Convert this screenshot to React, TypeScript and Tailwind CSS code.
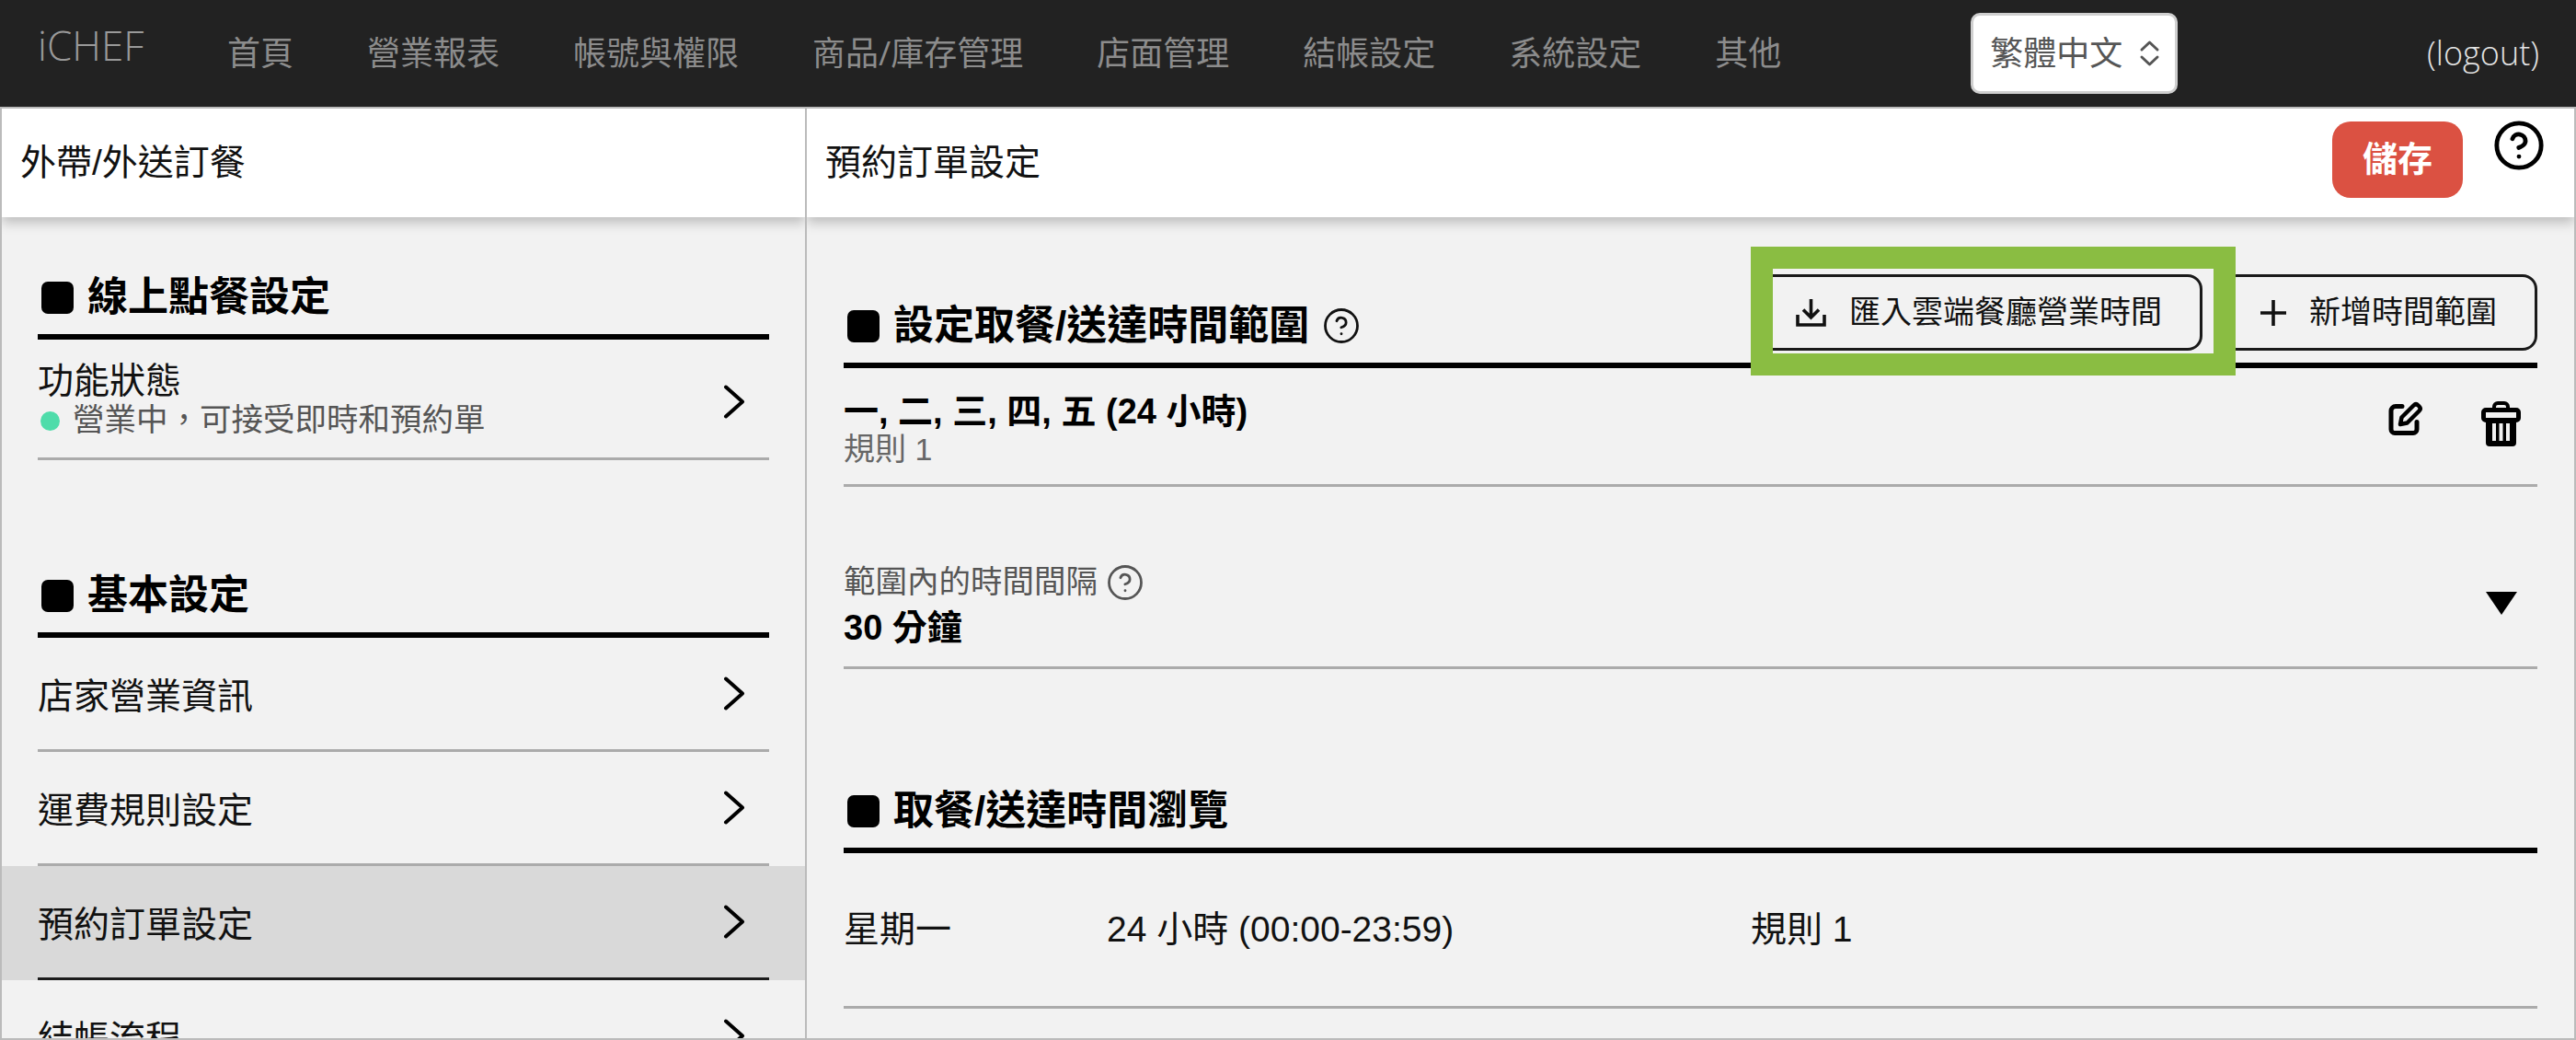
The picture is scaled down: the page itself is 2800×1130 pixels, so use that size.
import React from "react";
import { CircleHelp } from "lucide-react";

const sans = "font-['Liberation_Sans','Noto_Sans_CJK_TC',sans-serif]";

function Chevron() {
  return (
    <svg width="24" height="37" viewBox="0 0 24 37" fill="none" className="shrink-0">
      <path d="M3 2.5 L21 18.5 L3 34.5" stroke="#000" strokeWidth="4" strokeLinecap="round" strokeLinejoin="round" />
    </svg>
  );
}

function SectionHeading({ text, help }: { text: string; help?: boolean }) {
  return (
    <div className="h-[54px] flex items-center">
      <span className="w-[35px] h-[35px] rounded-[7px] bg-black ml-[4px] shrink-0" />
      <span className="ml-[15px] text-[44px] leading-[54px] font-bold text-black whitespace-nowrap">{text}</span>
      {help && <CircleHelp size={42} strokeWidth={1.6} color="#111" className="ml-[14px] shrink-0" />}
    </div>
  );
}

function MenuRow({ label, selected, last }: { label: string; selected?: boolean; last?: boolean }) {
  return (
    <div className={selected ? "bg-[#d9d9d9] px-[39px]" : "px-[39px]"}>
      <div
        className={
          "h-[124px] flex items-center justify-between pr-[26px] border-b-[3px] " +
          (selected ? "border-[#1c1c1c]" : last ? "border-transparent" : "border-[#ababab]")
        }
      >
        <span className="text-[39px] leading-[46px] text-[#111] pt-[6px] whitespace-nowrap">{label}</span>
        <Chevron />
      </div>
    </div>
  );
}

function EditIcon() {
  return (
    <svg width="38" height="37" viewBox="0 0 38 37" fill="none">
      <path d="M15 5.5H8a5 5 0 0 0-5 5v20a4 4 0 0 0 4 4h20a4 4 0 0 0 4-4v-8" stroke="#000" strokeWidth="5" strokeLinecap="round" />
      <path d="M13 25l1.5-7.5L27.5 4.5c1.6-1.6 3.4-1.6 5 0l1 1c1.6 1.6 1.6 3.4 0 5L20.5 23.5z" stroke="#000" strokeWidth="4.5" strokeLinejoin="round" />
    </svg>
  );
}

function TrashIcon() {
  return (
    <svg width="43" height="49" viewBox="0 0 43 49" fill="none">
      <path d="M14 10V6a4 4 0 0 1 4-4h7a4 4 0 0 1 4 4v4" stroke="#000" strokeWidth="4" />
      <rect x="2.5" y="9.5" width="38" height="11" rx="2.5" stroke="#000" strokeWidth="5" />
      <path d="M5 20h33v25a4 4 0 0 1-4 4H9a4 4 0 0 1-4-4z" fill="#000" />
      <rect x="12" y="24" width="4" height="19" fill="#f2f2f2" />
      <rect x="19.5" y="24" width="4" height="19" fill="#f2f2f2" />
      <rect x="27" y="24" width="4" height="19" fill="#f2f2f2" />
    </svg>
  );
}

export default function App() {
  return (
    <div className={"w-[2800px] h-[1130px] overflow-hidden flex flex-col bg-[#f2f2f2] " + sans}>
      <nav className="h-[116px] shrink-0 bg-[#222222] flex items-center pl-[41px] pr-[40px] font-['Open_Sans','Noto_Sans_CJK_TC',sans-serif]">
        <span className="text-[44px] leading-none font-light text-[#9a9a9a] -mt-[18px] w-[206px] shrink-0">iCHEF</span>
        <div className="flex gap-[80px] text-[36px] leading-[48px] text-[#8c8c8c] whitespace-nowrap">
          <span>首頁</span>
          <span>營業報表</span>
          <span>帳號與權限</span>
          <span>商品/庫存管理</span>
          <span>店面管理</span>
          <span>結帳設定</span>
          <span>系統設定</span>
          <span>其他</span>
        </div>
        <div className="ml-[206px] w-[225px] h-[88px] shrink-0 bg-white border-[3px] border-[#cfcfcf] rounded-[10px] flex items-center pl-[18px] gap-[18px] text-[36px] text-[#555]">
          <span className="whitespace-nowrap">繁體中文</span>
          <svg width="23" height="30" viewBox="0 0 23 30" fill="none" className="shrink-0">
            <path d="M3 11L11.5 3L20 11M3 19L11.5 27L20 19" stroke="#555" strokeWidth="3" strokeLinecap="round" strokeLinejoin="round" />
          </svg>
        </div>
        <span className="ml-auto text-[36px] font-light text-[#e4e4e4] whitespace-nowrap">(logout)</span>
      </nav>

      <div className="flex-1 min-h-0 flex border-t-2 border-b-2 border-l-2 border-r-2 border-[#bbbbbb]">
        <aside className="w-[875px] shrink-0 border-r-2 border-[#bbbbbb] flex flex-col min-h-0 overflow-hidden">
          <header className="relative z-10 h-[118px] shrink-0 bg-white shadow-[0_6px_12px_rgba(0,0,0,0.22)] flex items-center pl-[20px] text-[39px] text-[#111]">
            外帶/外送訂餐
          </header>
          <div className="flex-1 min-h-0 overflow-hidden pt-[60px]">
            <div className="px-[39px]">
              <div className="pb-[13px] border-b-[6px] border-black">
                <SectionHeading text="線上點餐設定" />
              </div>
              <div className="flex items-center justify-between pr-[26px] pt-[24px] pb-[18px] border-b-[3px] border-[#ababab]">
                <div>
                  <div className="text-[39px] leading-[42px] text-[#111]">功能狀態</div>
                  <div className="flex items-center h-[44px] text-[34.5px] text-[#555]">
                    <span className="w-[21px] h-[21px] rounded-full bg-[#4fdcaa] ml-[3px] mr-[14px]" />
                    營業中，可接受即時和預約單
                  </div>
                </div>
                <Chevron />
              </div>
              <div className="mt-[120px] pb-[13px] border-b-[6px] border-black">
                <SectionHeading text="基本設定" />
              </div>
            </div>
            <MenuRow label="店家營業資訊" />
            <MenuRow label="運費規則設定" />
            <MenuRow label="預約訂單設定" selected />
            <MenuRow label="結帳流程" last />
          </div>
        </aside>

        <main className="flex-1 min-w-0 flex flex-col min-h-0 overflow-hidden">
          <header className="relative z-10 h-[118px] shrink-0 bg-white shadow-[0_6px_12px_rgba(0,0,0,0.22)] flex items-start justify-between pl-[20px] pr-[36px]">
            <span className="text-[39px] leading-[118px] text-[#111] whitespace-nowrap">預約訂單設定</span>
            <div className="flex items-start gap-[37px] pt-[14px]">
              <button className="w-[142px] h-[83px] rounded-[20px] bg-[#db5142] text-white text-[38px] font-bold flex items-center justify-center">
                儲存
              </button>
              <CircleHelp size={58} strokeWidth={2} color="#000" className="-mx-[5px] -mt-[3px]" />
            </div>
          </header>
          <div className="flex-1 min-h-0 overflow-hidden px-[40px] pt-[62px]">
            <div className="flex justify-between pb-[13px] border-b-[6px] border-black">
              <div className="self-end">
                <SectionHeading text="設定取餐/送達時間範圍" help />
              </div>
              <div className="flex gap-[21px]">
                <div className="relative">
                  <button className="h-[83px] border-[3px] border-[#1a1a1a] rounded-[16px] pl-[39px] pr-[41px] flex items-center gap-[25px] text-[34px] text-[#111] whitespace-nowrap">
                    <svg width="33" height="31" viewBox="0 0 33 31" fill="none">
                      <path d="M16.5 1V20M8 12.5L16.5 21L25 12.5" stroke="#111" strokeWidth="3.6" />
                      <path d="M2 18V29H31V18" stroke="#111" strokeWidth="3.6" />
                    </svg>
                    匯入雲端餐廳營業時間
                  </button>
                  <div className="absolute -left-[7px] -top-[30px] -right-[36px] -bottom-[27px] border-[24px] border-[#8abd42] pointer-events-none" />
                </div>
                <button className="h-[83px] border-[3px] border-[#1a1a1a] rounded-[16px] pl-[39px] pr-[41px] flex items-center gap-[25px] text-[34px] text-[#111] whitespace-nowrap">
                  <svg width="28" height="28" viewBox="0 0 28 28" fill="none">
                    <path d="M14 0V28M0 14H28" stroke="#111" strokeWidth="3.6" />
                  </svg>
                  新增時間範圍
                </button>
              </div>
            </div>

            <div className="h-[129px] flex justify-between items-start border-b-[3px] border-[#ababab]">
              <div className="pt-[26px]">
                <div className="text-[38px] leading-[42px] font-bold text-black whitespace-nowrap">一, 二, 三, 四, 五 (24 小時)</div>
                <div className="text-[34px] leading-[40px] text-[#666] whitespace-nowrap">規則 1</div>
              </div>
              <div className="flex items-start gap-[63px] pr-[18px] pt-[36px]">
                <EditIcon />
                <TrashIcon />
              </div>
            </div>

            <div className="mt-[83px] pb-[21px] flex justify-between items-start border-b-[3px] border-[#ababab]">
              <div>
                <div className="flex items-center h-[42px] text-[34.5px] text-[#555] whitespace-nowrap">
                  範圍內的時間間隔
                  <CircleHelp size={42} strokeWidth={1.6} color="#555" className="ml-[9px]" />
                </div>
                <div className="mt-[7px] text-[38px] leading-[42px] font-bold text-black whitespace-nowrap">30 分鐘</div>
              </div>
              <svg width="34" height="25" viewBox="0 0 34 25" className="mr-[22px] mt-[31px]">
                <path d="M0 0H34L17 25Z" fill="#000" />
              </svg>
            </div>

            <div className="mt-[127px] pb-[13px] border-b-[6px] border-black">
              <SectionHeading text="取餐/送達時間瀏覽" />
            </div>

            <div className="h-[169px] flex items-center border-b-[3px] border-[#ababab] text-[39px] text-[#111] whitespace-nowrap">
              <span className="w-[286px]">星期一</span>
              <span className="w-[700px]">24 小時 (00:00-23:59)</span>
              <span>規則 1</span>
            </div>
          </div>
        </main>
      </div>
    </div>
  );
}
